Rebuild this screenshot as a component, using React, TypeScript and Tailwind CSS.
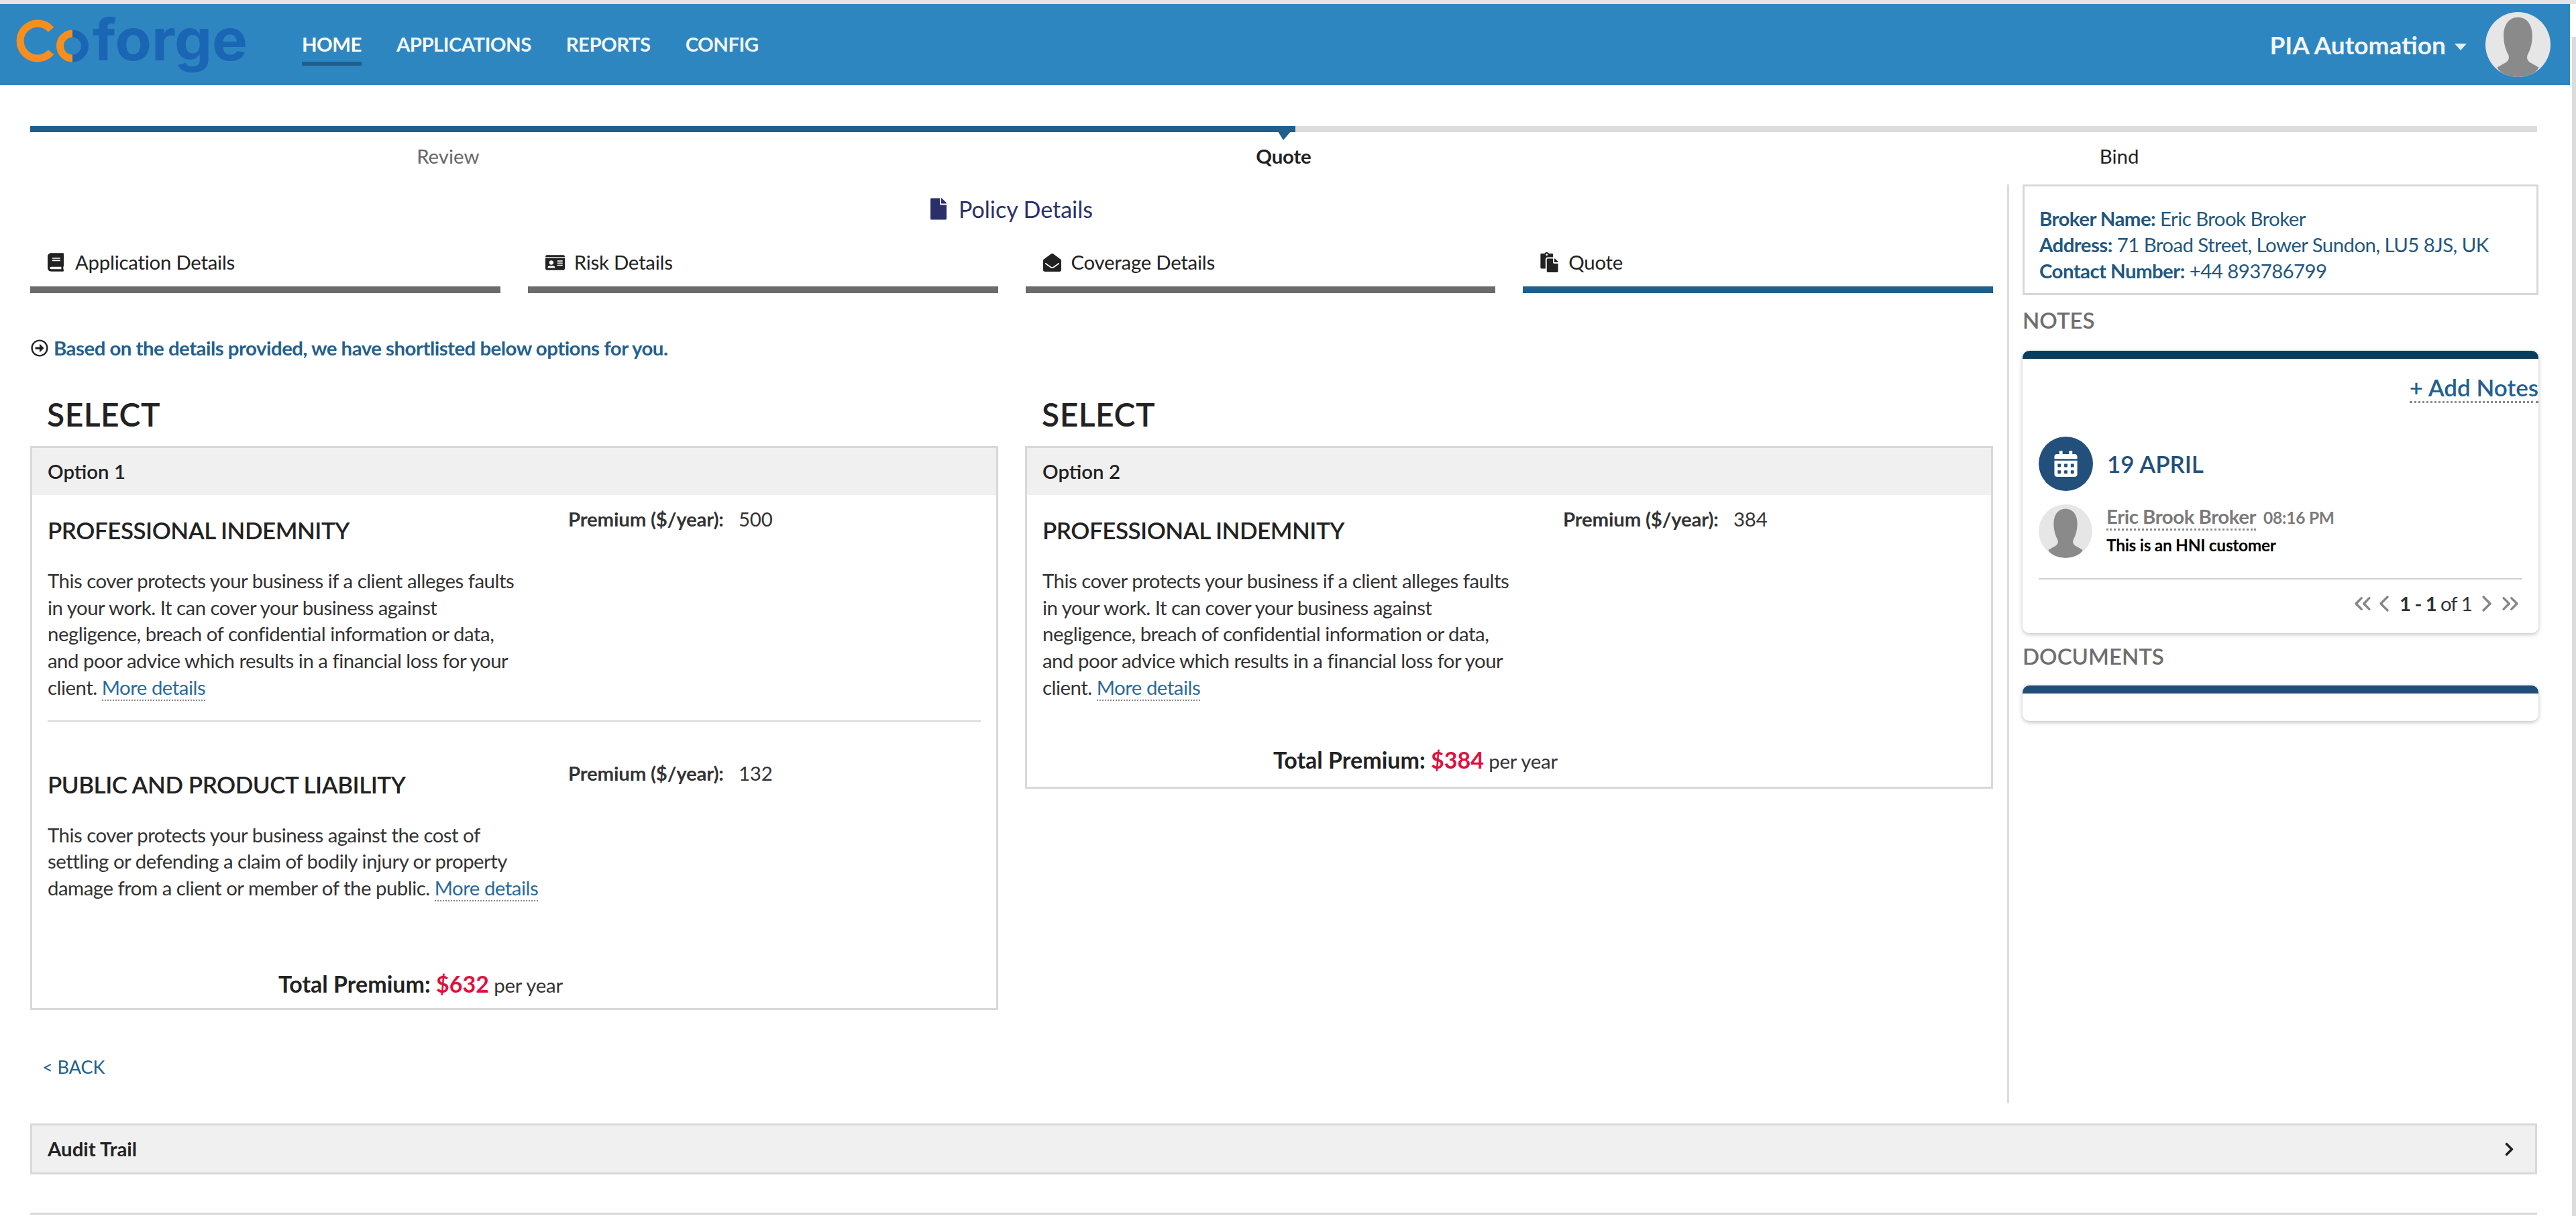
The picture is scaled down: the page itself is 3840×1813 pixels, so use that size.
import { ChevronLeft, ChevronRight, ChevronsLeft, ChevronsRight } from "lucide-react";
import {
  FaBook,
  FaCalendarAlt,
  FaChevronRight,
  FaEnvelopeOpen,
  FaFile,
  FaIdCard,
  FaPaste,
  FaRegArrowAltCircleRight,
} from "react-icons/fa";

const Logo = () => (
  <svg width="400" height="121" viewBox="0 6 400 121" className="shrink-0">
    <path d="M76 44.3 A26 26 0 1 0 76 77.7" fill="none" stroke="#f78f1e" strokeWidth="11" />
    <path d="M108 50 A18.5 18.5 0 0 0 108 87" fill="none" stroke="#f78f1e" strokeWidth="11" />
    <path d="M108 50 A18.5 18.5 0 0 1 108 87" fill="none" stroke="#1a66b5" strokeWidth="11" />
    <text
      x="138"
      y="90"
      textLength="231"
      lengthAdjust="spacingAndGlyphs"
      fontFamily="Inter, sans-serif"
      fontWeight="700"
      fontSize="86"
      fill="#1a66b5"
    >
      forge
    </text>
  </svg>
);

const Avatar = ({ size }: { size: string }) => (
  <svg viewBox="0 0 100 100" className={size}>
    <defs>
      <clipPath id="avatar-clip">
        <circle cx="50" cy="50" r="50" />
      </clipPath>
    </defs>
    <circle cx="50" cy="50" r="50" fill="#e6e6e6" />
    <path
      clipPath="url(#avatar-clip)"
      d="M50 8C36 8 28 20 28 36c0 12 3 22 7 29 2 5 1 9-3 12l-14 8c4 9 18 15 32 15s28-6 32-15l-14-8c-4-3-5-7-3-12 4-7 7-17 7-29C72 20 64 8 50 8z"
      fill="#8a8a8a"
    />
  </svg>
);

const MoreDetails = () => (
  <a className="border-b-2 border-dotted border-[#8a8a8a] pb-[1px] text-[#2a6a9e]">More details</a>
);

const tabs = [
  { label: "Application Details", gap: "gap-[17px]", icon: <FaBook className="w-[24px] text-[28px] text-[#222]" /> },
  { label: "Risk Details", gap: "gap-[14px]", icon: <FaIdCard className="text-[29px] text-[#222]" /> },
  { label: "Coverage Details", gap: "gap-[15px]", icon: <FaEnvelopeOpen className="w-[27px] text-[27px] text-[#222]" /> },
  { label: "Quote", gap: "gap-[15px]", icon: <FaPaste className="w-[27px] text-[30px] text-[#222]" />, active: true },
];

const Cover = ({ lines, last, title, premium }: { lines: string[]; last: string; title: string; premium: string }) => (
  <div className="flex">
    <div className="w-[776px] shrink-0">
      <h3 className="mt-[14px] whitespace-nowrap text-[35px] font-semibold leading-[44px] tracking-[-0.5px] text-[#222]">
        {title}
      </h3>
      <p className="mt-[34px] whitespace-nowrap text-[29.4px] leading-[39.7px] tracking-[-0.5px] text-[#333]">
        {lines.map((line) => (
          <span key={line}>
            {line}
            <br />
          </span>
        ))}
        {last} <MoreDetails />
      </p>
    </div>
    <div className="flex text-[29.4px] leading-[40px] tracking-[-0.2px] text-[#333]">
      <span className="w-[254px] font-bold">Premium ($/year):</span>
      <span>{premium}</span>
    </div>
  </div>
);

const indemnityLines = [
  "This cover protects your business if a client alleges faults",
  "in your work. It can cover your business against",
  "negligence, breach of confidential information or data,",
  "and poor advice which results in a financial loss for your",
];

const liabilityLines = [
  "This cover protects your business against the cost of",
  "settling or defending a claim of bodily injury or property",
];

const Total = ({ amount, className }: { amount: string; className: string }) => (
  <div className={`w-[1112px] text-center leading-[44px] ${className}`}>
    <span className="text-[34px] font-bold text-[#222]">Total Premium: </span>
    <span className="text-[34px] font-bold text-[#e0103f]">{amount}</span>
    <span className="text-[29.4px] tracking-[-0.2px] text-[#333]"> per year</span>
  </div>
);

const chevron = "h-[40px] w-[40px] text-[#858585]";

export default function App() {
  return (
    <div className="relative h-[1813px] w-full overflow-hidden bg-white font-['Lato',sans-serif]">
      <div className="h-[6px] bg-[#e4e4e4]" />

      {/* Header */}
      <header className="flex h-[121px] w-[3831px] items-center bg-[#2e86c1]">
        <Logo />
        <nav className="ml-[50px] flex items-center gap-[52px] text-[29.4px] font-bold tracking-[-0.55px] text-[#f2f6fa]">
          <a className="border-b-[6px] border-[#1f5f8b] pb-[3px] pt-[9px] text-white">HOME</a>
          <a>APPLICATIONS</a>
          <a>REPORTS</a>
          <a>CONFIG</a>
        </nav>
        <div className="ml-auto flex items-center pr-[29px]">
          <span className="text-[37px] font-bold text-[#f2f6fa]">PIA Automation</span>
          <span className="ml-[13px] mt-[6px] h-0 w-0 border-x-[9px] border-t-[10px] border-x-transparent border-t-[#e6eef5]" />
          <Avatar size="ml-[28px] h-[97px] w-[97px]" />
        </div>
      </header>

      {/* Stepper */}
      <div className="relative mx-[45px] mt-[61px] flex h-[9px] w-[3737px] bg-[#dcdcdc]">
        <div className="h-full w-[1886px] bg-[#1f5f8b]" />
        <div className="absolute left-[1855px] top-0 h-0 w-0 border-l-[13px] border-r-[18px] border-t-[21px] border-x-transparent border-t-[#1f5f8b]" />
      </div>
      <div className="mx-[45px] mt-[18px] grid w-[3737px] grid-cols-3 text-center text-[29.4px] leading-[36px]">
        <span className="text-[#666]">Review</span>
        <span className="font-bold tracking-[-0.2px] text-[#222]">Quote</span>
        <span className="text-[#222]">Bind</span>
      </div>

      {/* Main area */}
      <div className="ml-[45px] mt-[24px] flex w-[3737px]">
        <div className="w-[2926px] shrink-0">
          <div className="flex h-[72px] items-center justify-center gap-[18px] text-[34px] text-[#2a2f6b]">
            <FaFile className="w-[24px] text-[33px]" />
            <span>Policy Details</span>
          </div>

          <div className="mt-[23px] grid grid-cols-4 gap-[41px]">
            {tabs.map((tab) => (
              <div
                key={tab.label}
                className={`flex h-[67px] items-start border-b-[10px] pl-[26px] pt-[2px] text-[29.4px] leading-[38px] tracking-[-0.25px] text-[#222] ${tab.gap} ${
                  tab.active ? "border-[#1f5f8b]" : "border-[#6b6b6b]"
                }`}
              >
                <span className="flex h-[38px] items-center">{tab.icon}</span>
                <span>{tab.label}</span>
              </div>
            ))}
          </div>

          <div className="mt-[63px] flex h-[38px] items-center gap-[8px] pl-[1px] text-[29.4px] font-bold tracking-[-0.5px] text-[#22608f]">
            <FaRegArrowAltCircleRight className="text-[26px] text-[#222]" />
            <span>Based on the details provided, we have shortlisted below options for you.</span>
          </div>

          <div className="mt-[50px] grid grid-cols-2 items-start gap-[40px]">
            {/* Option 1 */}
            <div>
              <h2 className="pl-[25px] text-[48px] font-semibold leading-[60px] tracking-[0.5px] text-[#222]">SELECT</h2>
              <div className="mt-[17px] h-[841px] border-[3px] border-[#d8d8d8]">
                <div className="flex h-[70px] items-center bg-[#f0f0f0] pl-[23px] text-[29.4px] font-semibold text-[#222]">
                  Option 1
                </div>
                <div className="pl-[23px] pt-[16px]">
                  <Cover title="PROFESSIONAL INDEMNITY" lines={indemnityLines} last="client." premium="500" />
                  <div className="mt-[29px] h-[2px] w-[1391px] bg-[#d8d8d8]" />
                  <div className="mt-[57px]">
                    <Cover
                      title="PUBLIC AND PRODUCT LIABILITY"
                      lines={liabilityLines}
                      last="damage from a client or member of the public."
                      premium="132"
                    />
                  </div>
                  <Total amount="$632" className="mt-[101px]" />
                </div>
              </div>
            </div>

            {/* Option 2 */}
            <div>
              <h2 className="pl-[25px] text-[48px] font-semibold leading-[60px] tracking-[0.5px] text-[#222]">SELECT</h2>
              <div className="mt-[17px] h-[511px] border-[3px] border-[#d8d8d8]">
                <div className="flex h-[70px] items-center bg-[#f0f0f0] pl-[23px] text-[29.4px] font-semibold text-[#222]">
                  Option 2
                </div>
                <div className="pl-[23px] pt-[16px]">
                  <Cover title="PROFESSIONAL INDEMNITY" lines={indemnityLines} last="client." premium="384" />
                  <Total amount="$384" className="mt-[66px]" />
                </div>
              </div>
            </div>
          </div>

          <a className="mt-[67px] block pl-[18px] text-[27px] leading-[36px] text-[#22608f]">&lt; BACK</a>
        </div>

        <div className="ml-[21px] mr-[20px] h-[1370px] w-[3px] shrink-0 bg-[#dcdcdc]" />

        {/* Right column */}
        <aside className="w-[769px] shrink-0">
          <div className="h-[165px] border-[3px] border-[#d8d8d8] pl-[22px] pt-[28px] text-[29.4px] leading-[39px] tracking-[-0.55px] text-[#22577f]">
            <div>
              <b>Broker Name:</b> Eric Brook Broker
            </div>
            <div>
              <b>Address:</b> 71 Broad Street, Lower Sundon, LU5 8JS, UK
            </div>
            <div>
              <b>Contact Number:</b> +44 893786799
            </div>
          </div>

          <h4 className="mt-[16px] text-[33px] font-semibold leading-[42px] text-[#6e6e6e]">NOTES</h4>
          <div className="mt-[25px] h-[421px] rounded-[10px] border-t-[12px] border-[#083d5c] shadow-[0_2px_6px_rgba(0,0,0,0.25)]">
            <div className="flex justify-end pt-[21px]">
              <a className="border-b-[3px] border-dotted border-[#8a8a8a] text-[35px] font-semibold leading-[42px] text-[#22608f]">
                + Add Notes
              </a>
            </div>
            <div className="mx-[24px] mt-[50px] flex items-center gap-[21px]">
              <span className="flex h-[81px] w-[81px] items-center justify-center rounded-full bg-[#22507a]">
                <FaCalendarAlt className="text-[39px] text-white" />
              </span>
              <span className="text-[35px] font-semibold text-[#22507a]">19 APRIL</span>
            </div>
            <div className="mx-[24px] mt-[20px] flex items-start gap-[21px]">
              <Avatar size="h-[80px] w-[80px] shrink-0" />
              <div>
                <div className="flex items-baseline gap-[11px] leading-[36px]">
                  <span className="border-b-[3px] border-dotted border-[#8a8a8a] text-[29.4px] font-bold tracking-[-0.45px] text-[#7a7a7a]">
                    Eric Brook Broker
                  </span>
                  <span className="text-[24.5px] font-bold tracking-[-0.2px] text-[#7a7a7a]">08:16 PM</span>
                </div>
                <div className="mt-[6px] text-[24.5px] font-bold leading-[32px] tracking-[-0.3px] text-black">
                  This is an HNI customer
                </div>
              </div>
            </div>
            <div className="mx-[24px] mt-[30px] h-[2px] bg-[#cfcfcf]" />
            <div className="mr-[22px] mt-[16px] flex items-center justify-end text-[29.4px] leading-[40px] tracking-[-0.9px] text-[#333]">
              <ChevronsLeft className={chevron} strokeWidth={2} />
              <ChevronLeft className={`-ml-[8px] ${chevron}`} strokeWidth={2} />
              <span className="ml-[3px] font-bold">1 - 1</span>
              <span className="ml-[6px]">of 1</span>
              <ChevronRight className={`ml-[2px] ${chevron}`} strokeWidth={2} />
              <ChevronsRight className={`-ml-[5px] ${chevron}`} strokeWidth={2} />
            </div>
          </div>

          <h4 className="mt-[13px] text-[33px] font-semibold leading-[42px] text-[#6e6e6e]">DOCUMENTS</h4>
          <div className="mt-[23px] h-[53px] rounded-[10px] border-t-[12px] border-[#1f4f78] shadow-[0_2px_6px_rgba(0,0,0,0.25)]" />
        </aside>
      </div>

      {/* Audit trail */}
      <div className="ml-[45px] mt-[30px] flex h-[76px] w-[3737px] items-center justify-between border-[3px] border-[#d8d8d8] bg-[#f0f0f0] pl-[23px] pr-[27px] text-[29.4px] font-bold text-[#222]">
        <span>Audit Trail</span>
        <FaChevronRight className="text-[23px]" />
      </div>
      <div className="ml-[45px] mt-[57px] h-[3px] w-[3737px] bg-[#d8d8d8]" />

      {/* Scrollbar */}
      <div className="absolute bottom-0 right-0 top-[55px] w-[6px] bg-[#dcdcdc]" />
    </div>
  );
}
